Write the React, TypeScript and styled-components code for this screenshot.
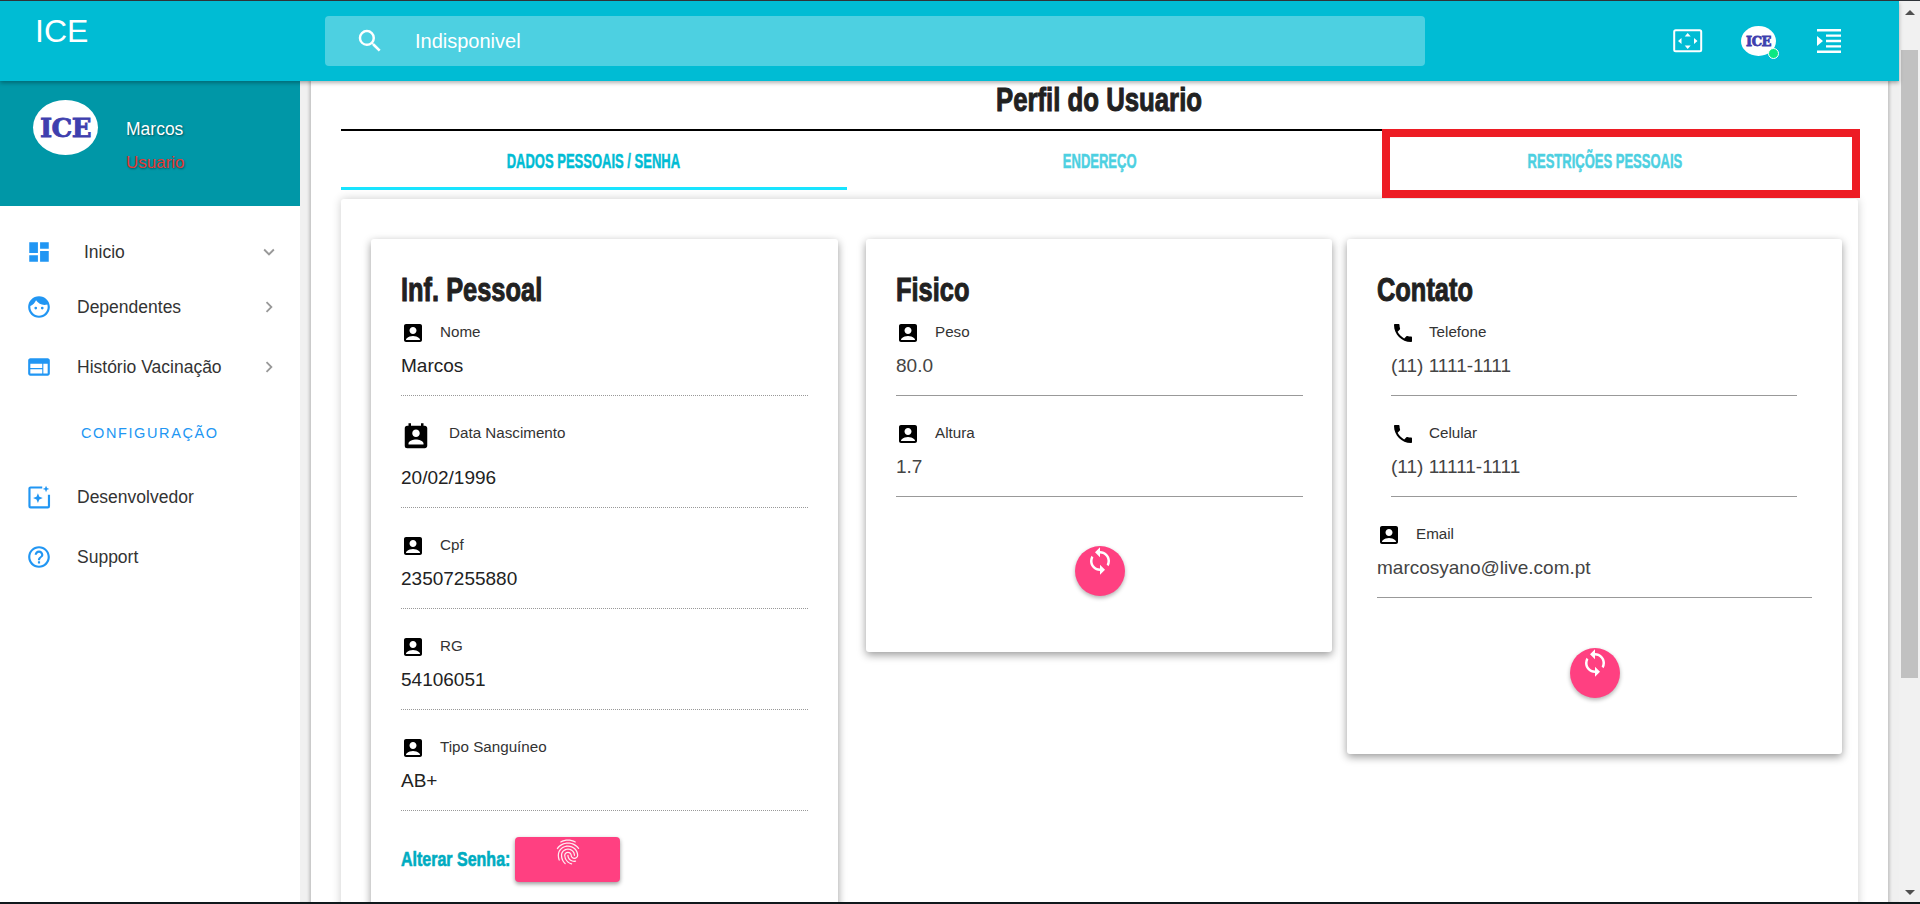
import React from 'react'
import styled, { createGlobalStyle } from 'styled-components'
import {
  MdAccountBox,
  MdDashboard,
  MdExpandMore,
  MdChevronRight,
  MdFace,
  MdFingerprint,
  MdHelpOutline,
  MdPermContactCalendar,
  MdPhone,
  MdSearch,
  MdSync,
  MdWeb,
} from 'react-icons/md'

const GlobalStyle = createGlobalStyle`
  html, body {
    margin: 0;
    height: 100%;
    overflow: hidden;
    background: #fff;
    font-family: "Liberation Sans", Arial, sans-serif;
  }
`

// no Impact on this box: bold Arial metrics squeezed sideways gets close
const Squeezed = styled.span<{ $x: number; $origin?: string; $stroke?: number }>`
  display: inline-block;
  white-space: nowrap;
  font-family: "Liberation Sans", Arial, sans-serif;
  font-weight: 700;
  transform: scaleX(${(p) => p.$x});
  transform-origin: ${(p) => p.$origin ?? 'center'};
  -webkit-text-stroke: ${(p) => p.$stroke ?? 1}px currentColor;
`

const Shell = styled.div`
  height: 904px;
  display: flex;
  flex-direction: column;
  border-top: 1px solid #2f3338;
  border-bottom: 2px solid #10191c;
  box-sizing: border-box;
  overflow: hidden;
`

const Frame = styled.div`
  flex: 1;
  min-height: 0;
  display: flex;
`

const Page = styled.div`
  flex: 1;
  min-width: 0;
  display: flex;
  flex-direction: column;
`

const ScrollRail = styled.div`
  width: 21px;
  background: #f1f1f1;
  display: flex;
  flex-direction: column;
  align-items: center;
  padding: 9px 0 7px;
  box-sizing: border-box;
`

const ArrowUp = styled.div`
  width: 0;
  height: 0;
  border-left: 5px solid transparent;
  border-right: 5px solid transparent;
  border-bottom: 5px solid #505050;
`

const ArrowDown = styled.div`
  width: 0;
  height: 0;
  border-left: 5px solid transparent;
  border-right: 5px solid transparent;
  border-top: 5px solid #505050;
  margin-top: auto;
`

const ScrollThumb = styled.div`
  width: 17px;
  height: 628px;
  margin-top: 35px;
  background: #c1c1c1;
`

const TopBar = styled.header`
  height: 80px;
  flex: none;
  background: #00bcd4;
  display: flex;
  box-shadow: 0 2px 4px rgba(0, 0, 0, 0.3);
  position: relative;
  z-index: 2;
`

const Brand = styled.div`
  width: 325px;
  flex: none;
  padding: 10px 0 0 35px;
  box-sizing: border-box;
  color: #fff;
  font-size: 32px;
  line-height: 40px;
`

const SearchBox = styled.div`
  width: 1100px;
  height: 50px;
  margin-top: 15px;
  background: rgba(255, 255, 255, 0.3);
  border-radius: 4px;
  display: flex;
  align-items: center;
  color: #fff;
  font-size: 20px;
  padding-left: 30px;
  box-sizing: border-box;
  gap: 30px;
`

const TopIcons = styled.div`
  flex: 1;
  display: flex;
  align-items: flex-start;
  padding: 28px 0 0 248px;
`

const TopAvatarWrap = styled.div`
  position: relative;
  margin: -3px 41px 0 38px;
`

const StatusDot = styled.span`
  position: absolute;
  right: -3px;
  bottom: -3px;
  width: 9px;
  height: 9px;
  border-radius: 50%;
  background: #0be881;
  border: 1px solid #fff;
`

const LogoOval = styled.div<{ $w: number; $h: number; $size: number }>`
  width: ${(p) => p.$w}px;
  height: ${(p) => p.$h}px;
  border-radius: 50%;
  background: #fff;
  display: flex;
  align-items: center;
  justify-content: center;
  color: #3f3fae;
  font-family: "DejaVu Serif", serif;
  font-weight: 700;
  font-size: ${(p) => p.$size}px;
  letter-spacing: -0.5px;
  -webkit-text-stroke: 0.8px #3f3fae;
`

const Content = styled.div`
  flex: 1;
  min-height: 0;
  display: flex;
`

const Sidebar = styled.aside`
  width: 300px;
  flex: none;
  background: #fff;
  display: flex;
  flex-direction: column;
`

const UserPanel = styled.div`
  height: 125px;
  flex: none;
  background: #0097a7;
  display: flex;
  padding: 19px 0 0 33px;
  box-sizing: border-box;
`

const UserText = styled.div`
  margin-left: 28px;
  padding-top: 19px;
  text-shadow: 1px 1px 2px rgba(0, 0, 0, 0.45);
`

const UserName = styled.div`
  color: #fff;
  font-size: 17.5px;
  line-height: 20px;
`

const UserRole = styled.div`
  color: #e53935;
  font-size: 17px;
  line-height: 20px;
  margin-top: 14px;
`

const NavList = styled.nav`
  display: flex;
  flex-direction: column;
  padding-top: 30px;
`

const NavItem = styled.div<{ $mb?: number }>`
  height: 32px;
  display: flex;
  align-items: center;
  padding: 0 20px 0 26px;
  margin-bottom: ${(p) => p.$mb ?? 28}px;
  color: #333;
  font-size: 17.5px;
  svg {
    flex: none;
  }
`

const NavIcon = styled.span`
  width: 26px;
  height: 26px;
  color: #2196f3;
  font-size: 26px;
  display: flex;
`

const NavLabel = styled.span<{ $indent?: number }>`
  margin-left: ${(p) => p.$indent ?? 25}px;
  flex: 1;
`

const NavChevron = styled.span`
  color: #999;
  font-size: 22px;
  display: flex;
`

const NavSection = styled.div`
  color: #2196f3;
  font-size: 14.5px;
  letter-spacing: 1.6px;
  padding-left: 81px;
  line-height: 20px;
  margin: 12px 0 38px;
`

const Gutter = styled.div<{ $w: number; $edge: 'left' | 'right' }>`
  width: ${(p) => p.$w}px;
  flex: none;
  background: #f0f0f0;
  box-shadow: inset ${(p) => (p.$edge === 'right' ? '-3px' : '3px')} 0 3px -1px rgba(0, 0, 0, 0.18);
`

const Main = styled.main`
  flex: 1;
  min-width: 0;
  padding: 0 30px 0 30px;
  overflow: hidden;
`

const PageTitle = styled.h1`
  margin: 0;
  height: 48px;
  line-height: 37px;
  text-align: center;
  font-size: 33px;
  font-weight: 700;
  color: #212121;
  border-bottom: 2px solid #000;
`

const Tabs = styled.div`
  display: grid;
  grid-template-columns: repeat(3, 1fr);
  height: 59px;
`

const Tab = styled.div<{ $active?: boolean }>`
  display: flex;
  align-items: flex-start;
  justify-content: center;
  padding-top: 20px;
  box-sizing: border-box;
  font-size: 20px;
  line-height: 20px;
  color: ${(p) => (p.$active ? '#00bcd4' : '#4dd0e1')};
  border-bottom: 3px solid ${(p) => (p.$active ? '#18e4ff' : 'transparent')};
  position: relative;
`

const FlagBox = styled.span`
  position: absolute;
  top: -2px;
  right: -2px;
  bottom: -11px;
  left: 30px;
  border: 8px solid #ed1c24;
  pointer-events: none;
`

const OuterCard = styled.div`
  margin-top: 9px;
  background: #fff;
  border-radius: 3px;
  box-shadow: 0 0 10px rgba(0, 0, 0, 0.2);
  padding: 40px 14px 40px 30px;
  display: flex;
  align-items: flex-start;
`

const InfoCard = styled.section<{ $width: number; $left?: number; $pad: number; $height: number }>`
  width: ${(p) => p.$width}px;
  margin-left: ${(p) => p.$left ?? 0}px;
  flex: none;
  height: ${(p) => p.$height}px;
  box-sizing: border-box;
  padding: 30px ${(p) => p.$pad}px 0 30px;
  background: #fff;
  border-radius: 3px;
  box-shadow: 0 3px 8px rgba(0, 0, 0, 0.4);
`

const CardTitle = styled.h2`
  margin: 0 0 10px;
  font-size: 33px;
  line-height: 42px;
  font-weight: 700;
  color: #212121;
`

const Field = styled.div<{ $dotted?: boolean; $inset?: number; $outset?: number; $noGap?: boolean }>`
  margin-left: ${(p) => p.$inset ?? 0}px;
  margin-right: ${(p) => p.$outset ?? 0}px;
  margin-bottom: ${(p) => (p.$noGap ? 0 : 26)}px;
  padding-bottom: 16px;
  border-bottom: 1px ${(p) => (p.$dotted ? 'dotted' : 'solid')} #999;
`

const FieldHead = styled.div<{ $tall?: boolean; $gap?: number }>`
  height: ${(p) => (p.$tall ? 35 : 24)}px;
  display: flex;
  align-items: flex-start;
  gap: ${(p) => p.$gap ?? 15}px;
  margin-bottom: 8px;
  color: #000;
  svg {
    display: block;
    flex: none;
  }
`

const FieldLabel = styled.span`
  font-size: 15.2px;
  line-height: 22px;
  color: #333;
`

const FieldValue = styled.div<{ $soft?: boolean }>`
  font-size: 19px;
  line-height: 26px;
  color: ${(p) => (p.$soft ? '#444' : '#222')};
`

const PasswordRow = styled.div`
  display: flex;
  align-items: center;
  gap: 5px;
  margin-top: 1px;
`

const PasswordLabel = styled.span`
  width: 109px;
  font-size: 20px;
  color: #00acc1;
`

const FingerButton = styled.button`
  width: 105px;
  height: 45px;
  padding: 0;
  border: 0;
  border-radius: 4px;
  background: #ff4081;
  color: rgba(255, 255, 255, 0.9);
  display: flex;
  justify-content: center;
  align-items: flex-start;
  box-shadow: 0 2px 4px rgba(0, 0, 0, 0.4);
`

const RoundButton = styled.button<{ $top: number }>`
  display: flex;
  justify-content: center;
  align-items: flex-start;
  width: 50px;
  height: 50px;
  margin: ${(p) => p.$top}px auto 0;
  padding: 0;
  border: 0;
  border-radius: 50%;
  background: #ff4081;
  color: #fff;
  box-shadow: 0 2px 4px rgba(0, 0, 0, 0.3);
`

const FullscreenIcon = () => (
  <svg width="30" height="24" viewBox="0 0 30 24" fill="none" style={{ display: 'block' }}>
    <rect x="1.2" y="1.2" width="27" height="21" rx="1.5" stroke="#fff" strokeWidth="2" />
    <path d="M14.7 4l3 3.5h-6zM14.7 20l3-3.5h-6zM5 12l3.5-3v6zM24.5 12l-3.5-3v6z" fill="#fff" />
  </svg>
)

const IndentIcon = () => (
  <svg width="24" height="24" viewBox="0 0 24 24" fill="#fff" style={{ display: 'block' }}>
    <path d="M0 0h24v2.4H0zM9 5.4h15v2.4H9zM9 10.8h15v2.4H9zM9 16.2h15v2.4H9zM0 21.6h24V24H0zM0 7l6 5-6 5z" />
  </svg>
)

const DevIcon = () => (
  <svg width="26" height="26" viewBox="0 0 24 24" fill="none" style={{ display: 'block' }}>
    <path d="M15 3.2H4.2a1 1 0 0 0-1 1V20.5a1 1 0 0 0 1 1h16a1 1 0 0 0 1-1V10" stroke="#2196f3" strokeWidth="2" />
    <path d="M11 8.5l1.3 3.2 3.2 1.3-3.2 1.3-1.3 3.2-1.3-3.2-3.2-1.3 3.2-1.3zM18.5 1.5l.9 2.1 2.1.9-2.1.9-.9 2.1-.9-2.1-2.1-.9 2.1-.9z" fill="#2196f3" />
  </svg>
)

type FieldData = { label: string; value: string; phone?: boolean }

const ProfileField = ({
  label,
  value,
  phone,
  dotted,
  inset,
  outset,
  soft,
  noGap,
}: FieldData & { dotted?: boolean; inset?: number; outset?: number; soft?: boolean; noGap?: boolean }) => (
  <Field $dotted={dotted} $inset={inset} $outset={outset} $noGap={noGap}>
    <FieldHead $gap={phone ? 14 : 15}>
      {phone ? <MdPhone size={24} /> : <MdAccountBox size={24} />}
      <FieldLabel>{label}</FieldLabel>
    </FieldHead>
    <FieldValue $soft={soft}>{value}</FieldValue>
  </Field>
)

export default function App() {
  return (
    <>
      <GlobalStyle />
      <Shell>
        <Frame>
          <Page>
            <TopBar>
              <Brand>ICE</Brand>
              <SearchBox>
                <MdSearch size={30} />
                <span>Indisponivel</span>
              </SearchBox>
              <TopIcons>
                <FullscreenIcon />
                <TopAvatarWrap>
                  <LogoOval $w={35} $h={30} $size={13}>ICE</LogoOval>
                  <StatusDot />
                </TopAvatarWrap>
                <IndentIcon />
              </TopIcons>
            </TopBar>
            <Content>
              <Sidebar>
                <UserPanel>
                  <LogoOval $w={65} $h={55} $size={26}>ICE</LogoOval>
                  <UserText>
                    <UserName>Marcos</UserName>
                    <UserRole>Usuario</UserRole>
                  </UserText>
                </UserPanel>
                <NavList>
                  <NavItem $mb={23}>
                    <NavIcon><MdDashboard /></NavIcon>
                    <NavLabel $indent={32}>Inicio</NavLabel>
                    <NavChevron><MdExpandMore /></NavChevron>
                  </NavItem>
                  <NavItem $mb={28}>
                    <NavIcon><MdFace /></NavIcon>
                    <NavLabel>Dependentes</NavLabel>
                    <NavChevron><MdChevronRight /></NavChevron>
                  </NavItem>
                  <NavItem>
                    <NavIcon><MdWeb /></NavIcon>
                    <NavLabel>Histório Vacinação</NavLabel>
                    <NavChevron><MdChevronRight /></NavChevron>
                  </NavItem>
                  <NavSection>CONFIGURAÇÃO</NavSection>
                  <NavItem>
                    <NavIcon><DevIcon /></NavIcon>
                    <NavLabel>Desenvolvedor</NavLabel>
                  </NavItem>
                  <NavItem>
                    <NavIcon><MdHelpOutline /></NavIcon>
                    <NavLabel>Support</NavLabel>
                  </NavItem>
                </NavList>
              </Sidebar>
              <Gutter $w={11} $edge="right" />
              <Main>
                <PageTitle><Squeezed $x={0.78}>Perfil do Usuario</Squeezed></PageTitle>
                <Tabs>
                  <Tab $active><Squeezed $x={0.65} $stroke={0.5}>DADOS PESSOAIS / SENHA</Squeezed></Tab>
                  <Tab><Squeezed $x={0.65} $stroke={0.5}>ENDEREÇO</Squeezed></Tab>
                  <Tab>
                    <Squeezed $x={0.65} $stroke={0.5}>RESTRIÇÕES PESSOAIS</Squeezed>
                    <FlagBox />
                  </Tab>
                </Tabs>
                <OuterCard>
                  <InfoCard $width={467} $pad={30} $height={740}>
                    <CardTitle><Squeezed $x={0.77} $origin="left">Inf. Pessoal</Squeezed></CardTitle>
                    <ProfileField dotted label="Nome" value="Marcos" />
                    <Field $dotted>
                      <FieldHead $tall $gap={18}>
                        <MdPermContactCalendar size={30} />
                        <FieldLabel>Data Nascimento</FieldLabel>
                      </FieldHead>
                      <FieldValue>20/02/1996</FieldValue>
                    </Field>
                    <ProfileField dotted label="Cpf" value="23507255880" />
                    <ProfileField dotted label="RG" value="54106051" />
                    <ProfileField dotted label="Tipo Sanguíneo" value="AB+" />
                    <PasswordRow>
                      <PasswordLabel><Squeezed $x={0.8} $origin="left" $stroke={0.6}>Alterar Senha:</Squeezed></PasswordLabel>
                      <FingerButton aria-label="Alterar senha">
                        <MdFingerprint size={30} />
                      </FingerButton>
                    </PasswordRow>
                  </InfoCard>
                  <InfoCard $width={466} $left={28} $pad={29} $height={413}>
                    <CardTitle><Squeezed $x={0.77} $origin="left">Fisico</Squeezed></CardTitle>
                    <ProfileField soft label="Peso" value="80.0" />
                    <ProfileField soft noGap label="Altura" value="1.7" />
                    <RoundButton $top={49} aria-label="Atualizar">
                      <MdSync size={30} />
                    </RoundButton>
                  </InfoCard>
                  <InfoCard $width={495} $left={15} $pad={30} $height={515}>
                    <CardTitle><Squeezed $x={0.77} $origin="left">Contato</Squeezed></CardTitle>
                    <ProfileField soft phone inset={14} outset={15} label="Telefone" value="(11) 1111-1111" />
                    <ProfileField soft phone inset={14} outset={15} label="Celular" value="(11) 11111-1111" />
                    <ProfileField soft noGap label="Email" value="marcosyano@live.com.pt" />
                    <RoundButton $top={50} aria-label="Atualizar">
                      <MdSync size={30} />
                    </RoundButton>
                  </InfoCard>
                </OuterCard>
              </Main>
              <Gutter $w={11} $edge="left" />
            </Content>
          </Page>
          <ScrollRail>
            <ArrowUp />
            <ScrollThumb />
            <ArrowDown />
          </ScrollRail>
        </Frame>
      </Shell>
    </>
  )
}
